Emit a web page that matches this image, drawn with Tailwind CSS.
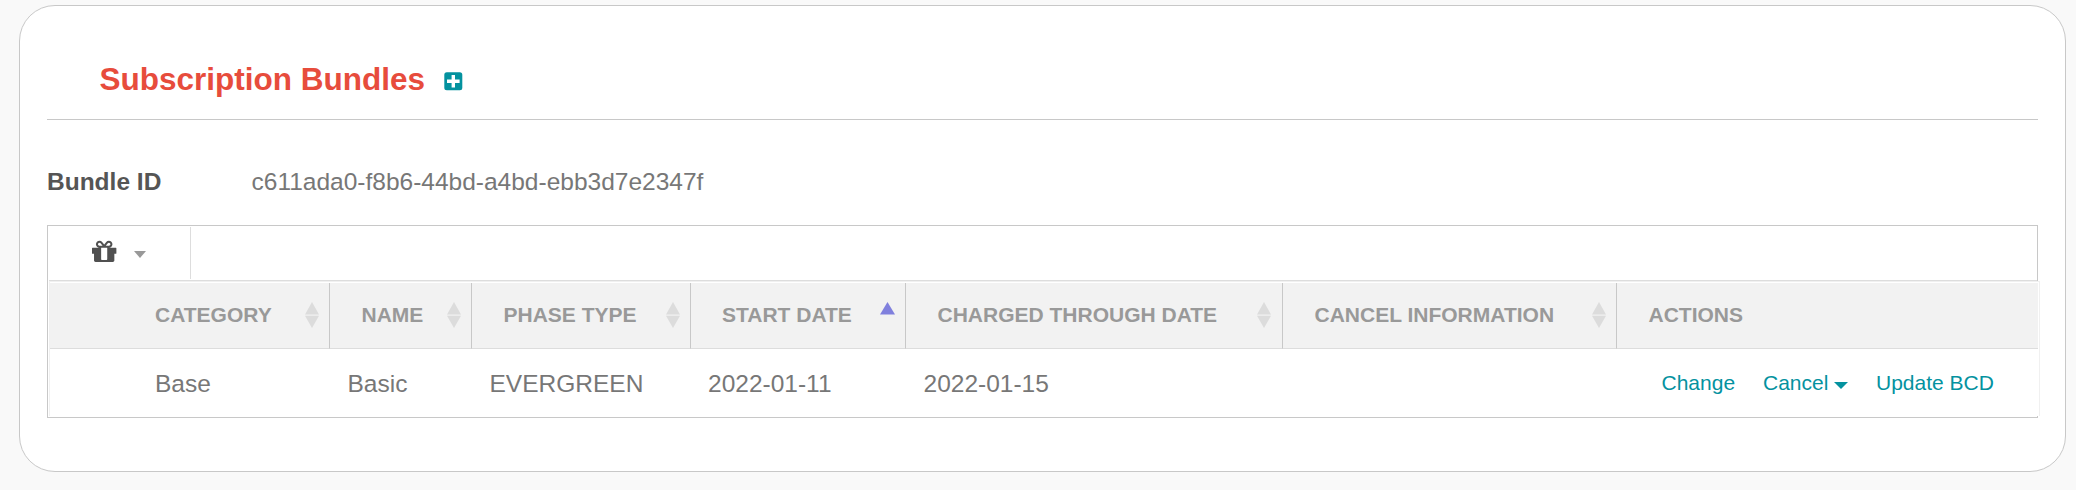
<!DOCTYPE html>
<html lang="en">
<head>
<meta charset="utf-8">
<title>Subscription Bundles</title>
<script src="https://cdn.jsdelivr.net/npm/@tailwindcss/browser@4"></script>
</head>
<body class="h-[490px] overflow-hidden bg-[#f9f9f9] pt-[5px] pl-[19px] font-['Liberation_Sans',Arial,sans-serif] text-[24.5px] text-[#777]">
<svg class="hidden">
  <symbol id="sort" viewBox="0 0 14 26"><path d="M7 0L14 12.4H0zM0 13.8H14L7 26z" fill="#dcdcdc"/></symbol>
</svg>
<main class="h-[467px] w-[2047px] rounded-[36px] border border-[#c8c8c8] bg-white pl-[27px]">
  <header class="flex h-[114px] w-[1991px] items-start border-b border-[#c8c8c8] pt-[55px] pl-[52.5px]">
    <h1 class="text-[31.5px] leading-[36px] font-bold text-[#e74c3c]">Subscription Bundles</h1>
    <a href="#" class="mt-[11px] ml-[18.5px]"><svg class="h-[19px] w-[19px]" viewBox="0 0 19 19"><rect x="0.3" y="0.3" width="18" height="18" rx="2.500" fill="#04929f"/><path d="M3 9.3H15.6M9.3 3V15.6" stroke="#fff" stroke-width="3.400"/></svg></a>
  </header>
  <div class="flex h-[105px] pt-[48px] leading-[28px]">
    <div class="w-[204.5px] font-bold text-[#555]">Bundle ID</div>
    <div>c611ada0-f8b6-44bd-a4bd-ebb3d7e2347f</div>
  </div>
  <section class="h-[193px] w-[1991px] border border-[#c8c8c8] pt-px pl-px">
    <div class="flex h-[54px] w-[1988px] border-b border-[#ddd] pb-px">
      <button class="flex w-[142px] items-start border-r border-[#ddd] pt-[13px] pl-[43px]">
        <svg class="h-[22px] w-[25px]" viewBox="0 150 1575 1386"><path fill="#505050" d="M960 1356v-716h-384v716q0 25 18 38.500t46 13.500h256q28 0 46-13.500t18-38.500zm-488-844h195l-126-161q-26-31-69-31-40 0-68 28t-28 68 28 68 68 28zm688-96q0-40-28-68t-68-28q-43 0-69 31l-125 161h194q40 0 68-28t28-68zm376 256v320q0 14-9 23t-23 9h-96v416q0 40-28 68t-68 28h-1088q-40 0-68-28t-28-68v-416h-96q-14 0-23-9t-9-23v-320q0-14 9-23t23-9h440q-93 0-158.500-65.500t-65.500-158.500 65.500-158.500 158.500-65.500q107 0 168 77l128 165 128-165q61-77 168-77 93 0 158.500 65.500t65.500 158.500-65.500 158.500-158.500 65.500h440q14 0 23 9t9 23z"/></svg>
        <svg class="mt-[11px] ml-[17px] h-[7px] w-[12px]" viewBox="0 0 12 7"><path d="M0 0H12L6 7z" fill="#999"/></svg>
      </button>
    </div>
    <div class="h-[135px] w-[1991px] border-x border-t border-[#f0f0f0] bg-white pt-px">
      <table class="w-[1988px] table-fixed border-collapse">
        <colgroup><col class="w-[280px]"><col class="w-[142px]"><col class="w-[219px]"><col class="w-[215px]"><col class="w-[377px]"><col class="w-[334px]"><col class="w-[421px]"></colgroup>
        <thead>
          <tr class="h-[66px] bg-[#f2f2f2] text-left text-[21px] leading-[24px] text-[#999]">
            <th class="p-0"><div class="flex h-[66px] justify-between border-r border-b border-r-[#c8c8c8] border-b-[#ddd] pt-[20px] pr-[10px] pl-[105px]">CATEGORY<svg class="-mt-[1px] h-[26px] w-[14px]"><use href="#sort"/></svg></div></th>
            <th class="p-0"><div class="flex h-[66px] justify-between border-r border-b border-r-[#c8c8c8] border-b-[#ddd] pt-[20px] pr-[10px] pl-[31.5px]">NAME<svg class="-mt-[1px] h-[26px] w-[14px]"><use href="#sort"/></svg></div></th>
            <th class="p-0"><div class="flex h-[66px] justify-between border-r border-b border-r-[#c8c8c8] border-b-[#ddd] pt-[20px] pr-[10px] pl-[31.5px]">PHASE TYPE<svg class="-mt-[1px] h-[26px] w-[14px]"><use href="#sort"/></svg></div></th>
            <th class="p-0"><div class="flex h-[66px] justify-between border-r border-b border-r-[#c8c8c8] border-b-[#ddd] pt-[20px] pr-[10px] pl-[31px]">START DATE<svg class="-mt-[1px] h-[13px] w-[15px]" viewBox="0 0 15 13"><path d="M7.500 0L15 12.500H0z" fill="#8080dd"/></svg></div></th>
            <th class="p-0"><div class="flex h-[66px] justify-between border-r border-b border-r-[#c8c8c8] border-b-[#ddd] pt-[20px] pr-[11px] pl-[31.5px]">CHARGED THROUGH DATE<svg class="-mt-[1px] h-[26px] w-[14px]"><use href="#sort"/></svg></div></th>
            <th class="p-0"><div class="flex h-[66px] justify-between border-r border-b border-r-[#c8c8c8] border-b-[#ddd] pt-[20px] pr-[10px] pl-[31.5px]">CANCEL INFORMATION<svg class="-mt-[1px] h-[26px] w-[14px]"><use href="#sort"/></svg></div></th>
            <th class="p-0"><div class="h-[66px] border-b border-[#ddd] pt-[20px] pl-[31.5px]">ACTIONS</div></th>
          </tr>
        </thead>
        <tbody>
          <tr class="h-[67px] align-top leading-[28px]">
            <td class="pt-[21px] pl-[105px]">Base</td>
            <td class="pt-[21px] pl-[17.5px]">Basic</td>
            <td class="pt-[21px] pl-[17.5px]">EVERGREEN</td>
            <td class="pt-[21px] pl-[17px]">2022-01-11</td>
            <td class="pt-[21px] pl-[17.5px]">2022-01-15</td>
            <td></td>
            <td class="p-0"><div class="flex pt-[22px] pl-[44.5px] text-[21px] leading-[24px] text-[#04929f]"><a href="#" class="w-[101.500px]">Change</a><a href="#" class="flex w-[113px]">Cancel<svg class="mt-[11px] ml-[5.5px] h-[7px] w-[14px]" viewBox="0 0 14 7"><path d="M0 0H14L7 7z" fill="#04929f"/></svg></a><a href="#">Update BCD</a></div></td>
          </tr>
        </tbody>
      </table>
    </div>
  </section>
</main>
</body>
</html>
